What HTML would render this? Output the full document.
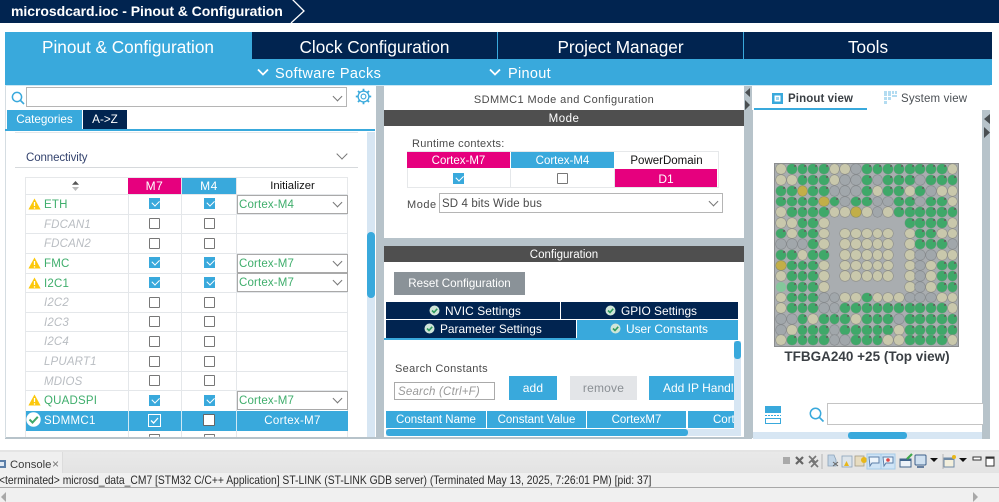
<!DOCTYPE html>
<html><head><meta charset="utf-8"><style>
html,body{margin:0;padding:0}
body{width:999px;height:502px;overflow:hidden;background:#fff;position:relative;font-family:"Liberation Sans",sans-serif;filter:blur(.3px)}
div,span,svg{position:absolute;white-space:nowrap;box-sizing:border-box}
.c{text-align:center}
.w{color:#fff}
.dk{background:#012450}.bl{background:#39a9dc}.pk{background:#e6007e}
.tab{top:32px;height:27px;line-height:30px;font-size:17.2px;text-align:center;color:#fff}
.ln{background:#e4e7ea;height:1px}
.lb{left:44px;font-size:11.5px;height:20px;line-height:20px;margin-top:1px;color:#b9bdc2;font-style:italic;letter-spacing:.15px}
.gn{font-style:normal;color:#3fae6c;letter-spacing:.2px}
.cb{width:11px;height:11px;border:1.5px solid #777;background:#fff;border-radius:1px}
.ck{width:11px;height:11px;background:#39a9dc}
.ck:after{content:"";position:absolute;left:2.5px;top:1.5px;width:6px;height:3.5px;border-left:1.5px solid #fff;border-bottom:1.5px solid #fff;transform:rotate(-45deg)}
.dd{left:237px;width:111px;height:19px;border:1px solid #a9a9a9;background:#fff;color:#3fae6c;font-size:11.5px;line-height:18px;padding-left:1px;letter-spacing:.15px}
.ch{width:7px;height:7px;border-right:1px solid #777;border-bottom:1px solid #777;transform:rotate(45deg)}
.tb{color:#fff;font-size:12px;text-align:center;height:18px;line-height:18px}
.bga{left:774px;top:163px;width:185px;height:184px;background:#a9adb0;border:1px solid #8b8d8f;display:grid;grid-template-columns:repeat(17,10.73px);grid-auto-rows:10.7px;padding:0 0 0 .65px}
.bga i{display:block;width:9.8px;height:9.8px;border-radius:50%;margin:.45px;position:relative}
.g{background:#3fa869;box-shadow:0 0 0 .4px #7f9a88}
.g:after{content:"";position:absolute;right:1px;top:1px;width:2px;height:2px;background:#5d6d60}
.e{background:#c9c8ac;box-shadow:0 0 0 .6px #8e8f88}
.s{background:#a1a7ab;box-shadow:0 0 0 .6px #85898c}
.y{background:#c2ae48;box-shadow:0 0 0 .6px #8e8f60}
.l{background:#84c79b}
.n{background:transparent}
.warn{left:28px;width:13px;height:12px}
</style></head><body>

<!-- title bar -->
<div class="dk" style="left:0;top:0;width:999px;height:23px"></div>
<div class="w" style="left:11px;top:2px;font-size:14px;font-weight:bold;line-height:18px;letter-spacing:-.05px">microsdcard.ioc - Pinout &amp; Configuration</div>
<svg style="left:288px;top:0" width="20" height="23"><path d="M4 -1 L16 11 L3 23" fill="none" stroke="#fff" stroke-width="1.3"/></svg>

<!-- tabs -->
<div class="bl" style="left:5px;top:32px;width:987px;height:53px"></div>
<div class="tab" style="left:5px;width:246px">Pinout &amp; Configuration</div>
<div class="tab dk" style="left:252px;width:245px">Clock Configuration</div>
<div class="tab dk" style="left:498px;width:245px">Project Manager</div>
<div class="tab dk" style="left:744px;width:248px">Tools</div>
<svg style="left:257px;top:68px" width="12" height="9"><path d="M1 1.5L6 6.5L11 1.5" fill="none" stroke="#fff" stroke-width="1.8"/></svg>
<div class="w" style="left:275px;top:65px;font-size:14.5px;line-height:18px;letter-spacing:.4px">Software Packs</div>
<svg style="left:489px;top:68px" width="12" height="9"><path d="M1 1.5L6 6.5L11 1.5" fill="none" stroke="#fff" stroke-width="1.8"/></svg>
<div class="w" style="left:508px;top:65px;font-size:14.5px;line-height:18px;letter-spacing:.3px">Pinout</div>

<!-- backgrounds -->
<div style="left:5px;top:85px;width:985px;height:1px;background:#cbe7f4"></div>
<div style="left:376px;top:86px;width:8px;height:353px;background:#b7c3ca"></div>
<div style="left:744px;top:86px;width:8px;height:353px;background:#b7c3ca"></div>
<div style="left:982px;top:110px;width:8px;height:329px;background:#b7c3ca"></div>
<div style="left:384px;top:238px;width:360px;height:8px;background:#b7c3ca"></div>
<div style="left:5px;top:437px;width:371px;height:2px;background:#b7c3ca"></div>
<div style="left:384px;top:437px;width:360px;height:2px;background:#b7c3ca"></div>
<div style="left:5px;top:86px;width:1px;height:352px;background:#d5dde2"></div>
<div style="left:752px;top:110px;width:1px;height:328px;background:#b7c3ca"></div>
<svg style="left:745px;top:88px" width="6" height="24"><path d="M5 0V9L0 4.5Z M0 12V22L5 17Z" fill="#4a4f52"/></svg>
<svg style="left:984px;top:114px" width="7" height="26"><path d="M6 0V10L0 5Z M0 13V24L6 18.5Z" fill="#4a4f52"/></svg>

<!-- left panel top -->
<svg style="left:11px;top:91px" width="15" height="15"><circle cx="6" cy="6" r="4.6" fill="none" stroke="#39a9dc" stroke-width="1.5"/><path d="M9.5 9.5L13 13" stroke="#39a9dc" stroke-width="1.6"/></svg>
<div style="left:26px;top:87px;width:321px;height:20px;border:1px solid #b5b5b5;background:#fff"></div>
<div class="ch" style="left:334px;top:93px"></div>
<svg style="left:355px;top:88px" width="17" height="17" viewBox="0 0 17 17"><circle cx="8.5" cy="8.5" r="5.4" fill="none" stroke="#39a9dc" stroke-width="1.3"/><circle cx="8.5" cy="8.5" r="2.4" fill="none" stroke="#39a9dc" stroke-width="1.1"/><path d="M8.5 0.8V3M8.5 14V16.2M0.8 8.5H3M14 8.5H16.2M3 3L4.6 4.6M12.4 12.4L14 14M14 3L12.4 4.6M4.6 12.4L3 14" stroke="#39a9dc" stroke-width="1.8"/></svg>
<div class="bl tb" style="left:7px;top:110px;width:75px;height:19px;line-height:19px;font-size:11.7px">Categories</div>
<div class="dk tb" style="left:83px;top:110px;width:44px;height:19px;line-height:19px;font-size:11.7px">A-&gt;Z</div>
<div class="bl" style="left:5px;top:129px;width:370px;height:2px"></div>
<div style="left:367px;top:132px;width:8px;height:305px;background:#d7e6f3"></div>
<div class="bl" style="left:367px;top:232px;width:8px;height:66px;border-radius:4px"></div>
<div class="ln" style="left:15px;top:132px;width:343px"></div>
<div style="left:26px;top:151px;font-size:11.5px;line-height:15px;color:#34436e;letter-spacing:-.1px">Connectivity</div>
<div class="ch" style="left:338px;top:150px;width:8px;height:8px"></div>
<div class="ln" style="left:15px;top:167px;width:343px;background:#d6d9dc"></div>

<!-- table -->
<div style="left:25px;top:177px;width:323px;height:260px;border:1px solid #e6e8ea;border-bottom:0"></div>
<div class="ln" style="left:128px;top:177px;width:1px;height:260px"></div>
<div class="ln" style="left:181px;top:177px;width:1px;height:260px"></div>
<div class="ln" style="left:236px;top:177px;width:1px;height:260px"></div>
<div class="ln" style="left:25px;top:194px;width:323px"></div>
<div class="ln" style="left:25px;top:214px;width:323px"></div>
<div class="ln" style="left:25px;top:233px;width:323px"></div>
<div class="ln" style="left:25px;top:253px;width:323px"></div>
<div class="ln" style="left:25px;top:273px;width:323px"></div>
<div class="ln" style="left:25px;top:292px;width:323px"></div>
<div class="ln" style="left:25px;top:312px;width:323px"></div>
<div class="ln" style="left:25px;top:331px;width:323px"></div>
<div class="ln" style="left:25px;top:351px;width:323px"></div>
<div class="ln" style="left:25px;top:371px;width:323px"></div>
<div class="ln" style="left:25px;top:390px;width:323px"></div>
<svg style="left:71px;top:181px" width="9" height="11"><path d="M4.5 0L8 3.8H1Z" fill="#555"/><path d="M4.5 10L8 6H1Z" fill="#bbb"/></svg>
<div class="pk tb" style="left:128px;top:178px;width:53px;height:16px;line-height:17px;font-size:12px;letter-spacing:.6px">M7</div>
<div class="bl tb" style="left:182px;top:178px;width:54px;height:16px;line-height:17px;font-size:12px;letter-spacing:.6px">M4</div>
<div class="tb" style="left:237px;top:178px;width:111px;height:16px;line-height:17px;color:#111;font-size:11.3px">Initializer</div>

<svg class="warn" style="top:198px" viewBox="0 0 13 12"><path d="M6.5 0.5L12.6 11.5H0.4Z" fill="#fcc80b"/><path d="M6.5 4V8M6.5 9.2V10.6" stroke="#fff" stroke-width="1.3"/></svg>
<svg class="warn" style="top:257px" viewBox="0 0 13 12"><path d="M6.5 0.5L12.6 11.5H0.4Z" fill="#fcc80b"/><path d="M6.5 4V8M6.5 9.2V10.6" stroke="#fff" stroke-width="1.3"/></svg>
<svg class="warn" style="top:277px" viewBox="0 0 13 12"><path d="M6.5 0.5L12.6 11.5H0.4Z" fill="#fcc80b"/><path d="M6.5 4V8M6.5 9.2V10.6" stroke="#fff" stroke-width="1.3"/></svg>
<svg class="warn" style="top:394px" viewBox="0 0 13 12"><path d="M6.5 0.5L12.6 11.5H0.4Z" fill="#fcc80b"/><path d="M6.5 4V8M6.5 9.2V10.6" stroke="#fff" stroke-width="1.3"/></svg>

<div class="lb gn" style="top:194px">ETH</div>
<div class="lb" style="top:214px">FDCAN1</div>
<div class="lb" style="top:233px">FDCAN2</div>
<div class="lb gn" style="top:253px">FMC</div>
<div class="lb gn" style="top:273px">I2C1</div>
<div class="lb" style="top:292px">I2C2</div>
<div class="lb" style="top:312px">I2C3</div>
<div class="lb" style="top:331px">I2C4</div>
<div class="lb" style="top:351px">LPUART1</div>
<div class="lb" style="top:371px">MDIOS</div>
<div class="lb gn" style="top:390px">QUADSPI</div>

<div class="ck" style="left:149px;top:198px"></div><div class="ck" style="left:204px;top:198px"></div>
<div class="cb" style="left:149px;top:218px"></div><div class="cb" style="left:204px;top:218px"></div>
<div class="cb" style="left:149px;top:238px"></div><div class="cb" style="left:204px;top:238px"></div>
<div class="ck" style="left:149px;top:257px"></div><div class="ck" style="left:204px;top:257px"></div>
<div class="ck" style="left:149px;top:277px"></div><div class="ck" style="left:204px;top:277px"></div>
<div class="cb" style="left:149px;top:297px"></div><div class="cb" style="left:204px;top:297px"></div>
<div class="cb" style="left:149px;top:316px"></div><div class="cb" style="left:204px;top:316px"></div>
<div class="cb" style="left:149px;top:336px"></div><div class="cb" style="left:204px;top:336px"></div>
<div class="cb" style="left:149px;top:356px"></div><div class="cb" style="left:204px;top:356px"></div>
<div class="cb" style="left:149px;top:375px"></div><div class="cb" style="left:204px;top:375px"></div>
<div class="ck" style="left:149px;top:395px"></div><div class="ck" style="left:204px;top:395px"></div>
<div class="cb" style="left:149px;top:434px;height:3px;border-bottom:0"></div><div class="cb" style="left:204px;top:434px;height:3px;border-bottom:0"></div>

<div class="dd" style="top:195px">Cortex-M4<div class="ch" style="left:96px;top:3px"></div></div>
<div class="dd" style="top:254px">Cortex-M7<div class="ch" style="left:96px;top:3px"></div></div>
<div class="dd" style="top:273px">Cortex-M7<div class="ch" style="left:96px;top:3px"></div></div>
<div class="dd" style="top:391px">Cortex-M7<div class="ch" style="left:96px;top:3px"></div></div>

<!-- selected row -->
<div class="bl" style="left:26px;top:411px;width:322px;height:20px"></div>
<div style="left:128px;top:411px;width:1px;height:20px;background:#cfe9f5"></div>
<div style="left:181px;top:411px;width:1px;height:20px;background:#cfe9f5"></div>
<div style="left:236px;top:411px;width:1px;height:20px;background:#cfe9f5"></div>
<svg style="left:26px;top:412px" width="15" height="15"><circle cx="7.5" cy="7.5" r="7.2" fill="#fff"/><path d="M3.5 7.5L6.5 10.5L11.8 4.8" fill="none" stroke="#3fa869" stroke-width="2"/></svg>
<div class="w" style="left:44px;top:411px;font-size:11.5px;line-height:21px;letter-spacing:.3px">SDMMC1</div>
<div style="left:148px;top:414px;width:13px;height:13px;border:1px solid #fff"></div>
<svg style="left:150px;top:416px" width="9" height="9"><path d="M1 4.5L3.6 7L8 2" fill="none" stroke="#fff" stroke-width="1.3"/></svg>
<div class="cb" style="left:203px;top:414px;width:12px;height:12px;border-color:#666"></div>
<div class="w c" style="left:237px;top:411px;width:111px;font-size:11.5px;line-height:21px;letter-spacing:.3px">Cortex-M7</div>

<!-- middle: mode -->
<div class="c" style="left:384px;top:92px;width:360px;font-size:11px;line-height:16px;color:#4a4a4a;letter-spacing:.42px">SDMMC1 Mode and Configuration</div>
<div class="w c" style="left:384px;top:110px;width:360px;height:16px;background:#4f4f4f;font-size:11.5px;line-height:18px;letter-spacing:.5px">Mode</div>
<div style="left:412px;top:137px;font-size:11px;line-height:15px;color:#4a4a4a;letter-spacing:.27px">Runtime contexts:</div>
<div style="left:407px;top:151px;width:312px;height:37px;border:1px solid #e6e8ea"></div>
<div class="pk tb" style="left:407px;top:152px;width:103px;height:16px;line-height:18px;font-size:11.5px">Cortex-M7</div>
<div class="bl tb" style="left:511px;top:152px;width:103px;height:16px;line-height:18px;font-size:11.5px">Cortex-M4</div>
<div class="tb" style="left:615px;top:152px;width:103px;height:16px;line-height:18px;color:#111;font-size:11.5px">PowerDomain</div>
<div class="ln" style="left:510px;top:169px;width:1px;height:18px"></div>
<div class="ln" style="left:614px;top:169px;width:1px;height:18px"></div>
<div class="ck" style="left:453px;top:173px"></div>
<div class="cb" style="left:557px;top:173px"></div>
<div class="pk tb" style="left:615px;top:169px;width:102px;height:18px;line-height:20px">D1</div>
<div style="left:407px;top:198px;font-size:11px;line-height:14px;color:#4a4a4a;letter-spacing:.55px">Mode</div>
<div style="left:439px;top:193px;width:284px;height:20px;border:1px solid #b5b5b5;color:#4a4a4a;font-size:11.5px;line-height:20px;padding-left:2px;letter-spacing:.12px">SD 4 bits Wide bus<div class="ch" style="left:270px;top:4px"></div></div>

<!-- config -->
<div class="w c" style="left:384px;top:246px;width:360px;height:16px;background:#4f4f4f;font-size:11.5px;line-height:18px">Configuration</div>
<div class="w c" style="left:394px;top:272px;width:131px;height:23px;background:#8a9298;font-size:11.6px;line-height:24px">Reset Configuration</div>
<div class="dk" style="left:386px;top:302px;width:174px;height:17px"></div>
<div class="dk" style="left:561px;top:302px;width:177px;height:17px"></div>
<div class="dk" style="left:386px;top:320px;width:190px;height:18px"></div>
<div class="bl" style="left:577px;top:320px;width:161px;height:18px"></div>
<div class="bl" style="left:384px;top:338px;width:354px;height:2px"></div>

<svg style="left:429px;top:305px" width="11" height="11"><circle cx="5.5" cy="5.5" r="5" fill="#cfe5d8"/><path d="M3 5.5L5 7.5L8.2 3.8" fill="none" stroke="#2f9c5e" stroke-width="1.6"/></svg>
<div class="w" style="left:445px;top:302px;font-size:11.9px;line-height:18px;letter-spacing:.1px">NVIC Settings</div>
<svg style="left:605px;top:305px" width="11" height="11"><circle cx="5.5" cy="5.5" r="5" fill="#cfe5d8"/><path d="M3 5.5L5 7.5L8.2 3.8" fill="none" stroke="#2f9c5e" stroke-width="1.6"/></svg>
<div class="w" style="left:621px;top:302px;font-size:11.9px;line-height:18px">GPIO Settings</div>
<svg style="left:424px;top:323px" width="11" height="11"><circle cx="5.5" cy="5.5" r="5" fill="#cfe5d8"/><path d="M3 5.5L5 7.5L8.2 3.8" fill="none" stroke="#2f9c5e" stroke-width="1.6"/></svg>
<div class="w" style="left:440px;top:320px;font-size:11.9px;line-height:18px">Parameter Settings</div>
<svg style="left:610px;top:323px" width="11" height="11"><circle cx="5.5" cy="5.5" r="5" fill="#cfe5d8"/><path d="M3 5.5L5 7.5L8.2 3.8" fill="none" stroke="#2f9c5e" stroke-width="1.6"/></svg>
<div class="w" style="left:626px;top:320px;font-size:11.9px;line-height:18px">User Constants</div>

<div style="left:734px;top:341px;width:7px;height:95px;background:#d7e6f3"></div>
<div class="bl" style="left:734px;top:341px;width:7px;height:18px;border-radius:3px"></div>
<div style="left:395px;top:362px;font-size:11px;line-height:14px;color:#4a4a4a;letter-spacing:.35px">Search Constants</div>
<div style="left:394px;top:382px;width:101px;height:18px;border:1px solid #aaa;color:#999;font-size:11.5px;line-height:18px;padding-left:3px;font-style:italic;letter-spacing:.2px">Search (Ctrl+F)</div>
<div class="bl tb" style="left:509px;top:376px;width:48px;height:24px;line-height:24px;letter-spacing:.2px">add</div>
<div class="tb" style="left:570px;top:376px;width:67px;height:24px;line-height:24px;background:#e3e5e8;color:#8a8f94;letter-spacing:.2px">remove</div>
<div style="left:649px;top:376px;width:85px;height:24px;overflow:hidden" class="bl"><div class="w" style="left:14px;top:0;font-size:12px;line-height:24px">Add IP Handle</div></div>
<div class="bl tb" style="left:386px;top:411px;width:100px;height:17px;line-height:19px;font-size:11.5px">Constant Name</div>
<div class="bl tb" style="left:487px;top:411px;width:99px;height:17px;line-height:19px;font-size:11.5px">Constant Value</div>
<div class="bl tb" style="left:587px;top:411px;width:99px;height:17px;line-height:19px;font-size:11.5px">CortexM7</div>
<div class="bl" style="left:688px;top:411px;width:46px;height:17px;overflow:hidden"><div class="w" style="left:25px;top:0;font-size:11.5px;line-height:19px">CortexM4</div></div>
<div style="left:386px;top:429px;width:348px;height:7px;background:#d7e6f3"></div>
<div class="bl" style="left:386px;top:429px;width:302px;height:7px;border-radius:3px"></div>

<!-- right panel -->
<svg style="left:771px;top:92px" width="13" height="13"><rect x="1" y="1" width="11" height="11" fill="#39a9dc"/><rect x="3.5" y="3.5" width="6" height="6" fill="#fff"/><rect x="5" y="5" width="3" height="3" fill="#9dd4ee"/></svg>
<div style="left:788px;top:92px;font-size:11.5px;font-weight:bold;line-height:15px;color:#3a3f44;letter-spacing:.1px">Pinout view</div>
<div class="bl" style="left:754px;top:108px;width:113px;height:2px"></div>
<svg style="left:884px;top:91px" width="13" height="14"><path d="M0 0h3v5H0zM4 0h3v5H4zM8 0h2v3H8zM11 0h2v3h-2zM0 6h3v3H0zM4 6h3v3H4zM8 4h5v2H8zM0 10h3v3H0z" fill="#b3dcf1"/></svg>
<div style="left:901px;top:92px;font-size:11.5px;line-height:15px;color:#4a4f54;letter-spacing:.15px">System view</div>

<div class="bga">
<i class="e"></i><i class="g"></i><i class="g"></i><i class="g"></i><i class="g"></i><i class="e"></i><i class="e"></i><i class="s"></i><i class="g"></i><i class="g"></i><i class="g"></i><i class="g"></i><i class="g"></i><i class="g"></i><i class="g"></i><i class="g"></i><i class="e"></i>
<i class="e"></i><i class="e"></i><i class="g"></i><i class="g"></i><i class="g"></i><i class="e"></i><i class="s"></i><i class="s"></i><i class="g"></i><i class="s"></i><i class="g"></i><i class="g"></i><i class="g"></i><i class="s"></i><i class="g"></i><i class="g"></i><i class="g"></i>
<i class="g"></i><i class="g"></i><i class="y"></i><i class="g"></i><i class="g"></i><i class="s"></i><i class="s"></i><i class="s"></i><i class="g"></i><i class="e"></i><i class="g"></i><i class="g"></i><i class="e"></i><i class="g"></i><i class="s"></i><i class="e"></i><i class="e"></i>
<i class="g"></i><i class="g"></i><i class="g"></i><i class="g"></i><i class="y"></i><i class="g"></i><i class="s"></i><i class="g"></i><i class="g"></i><i class="s"></i><i class="s"></i><i class="g"></i><i class="g"></i><i class="s"></i><i class="g"></i><i class="g"></i><i class="e"></i>
<i class="e"></i><i class="g"></i><i class="g"></i><i class="g"></i><i class="g"></i><i class="e"></i><i class="e"></i><i class="y"></i><i class="e"></i><i class="s"></i><i class="e"></i><i class="g"></i><i class="g"></i><i class="g"></i><i class="g"></i><i class="g"></i><i class="g"></i>
<i class="e"></i><i class="e"></i><i class="g"></i><i class="g"></i><i class="e"></i><i class="n"></i><i class="n"></i><i class="n"></i><i class="n"></i><i class="n"></i><i class="n"></i><i class="n"></i><i class="g"></i><i class="g"></i><i class="g"></i><i class="g"></i><i class="e"></i>
<i class="g"></i><i class="e"></i><i class="g"></i><i class="g"></i><i class="e"></i><i class="n"></i><i class="e"></i><i class="e"></i><i class="e"></i><i class="e"></i><i class="e"></i><i class="n"></i><i class="e"></i><i class="g"></i><i class="g"></i><i class="e"></i><i class="e"></i>
<i class="s"></i><i class="s"></i><i class="s"></i><i class="g"></i><i class="e"></i><i class="n"></i><i class="e"></i><i class="e"></i><i class="e"></i><i class="e"></i><i class="e"></i><i class="n"></i><i class="e"></i><i class="g"></i><i class="g"></i><i class="g"></i><i class="s"></i>
<i class="g"></i><i class="g"></i><i class="e"></i><i class="g"></i><i class="g"></i><i class="n"></i><i class="e"></i><i class="e"></i><i class="e"></i><i class="e"></i><i class="e"></i><i class="n"></i><i class="e"></i><i class="s"></i><i class="s"></i><i class="e"></i><i class="e"></i>
<i class="y"></i><i class="g"></i><i class="g"></i><i class="g"></i><i class="e"></i><i class="n"></i><i class="e"></i><i class="e"></i><i class="e"></i><i class="e"></i><i class="e"></i><i class="n"></i><i class="e"></i><i class="s"></i><i class="e"></i><i class="g"></i><i class="g"></i>
<i class="e"></i><i class="g"></i><i class="g"></i><i class="g"></i><i class="e"></i><i class="n"></i><i class="e"></i><i class="e"></i><i class="e"></i><i class="e"></i><i class="e"></i><i class="n"></i><i class="e"></i><i class="s"></i><i class="e"></i><i class="g"></i><i class="g"></i>
<i class="l"></i><i class="g"></i><i class="g"></i><i class="g"></i><i class="e"></i><i class="n"></i><i class="n"></i><i class="n"></i><i class="n"></i><i class="n"></i><i class="n"></i><i class="n"></i><i class="e"></i><i class="s"></i><i class="e"></i><i class="g"></i><i class="g"></i>
<i class="e"></i><i class="g"></i><i class="g"></i><i class="g"></i><i class="s"></i><i class="s"></i><i class="e"></i><i class="e"></i><i class="g"></i><i class="e"></i><i class="e"></i><i class="e"></i><i class="s"></i><i class="s"></i><i class="s"></i><i class="e"></i><i class="e"></i>
<i class="e"></i><i class="g"></i><i class="g"></i><i class="g"></i><i class="s"></i><i class="s"></i><i class="g"></i><i class="g"></i><i class="g"></i><i class="g"></i><i class="g"></i><i class="g"></i><i class="g"></i><i class="g"></i><i class="g"></i><i class="g"></i><i class="e"></i>
<i class="s"></i><i class="s"></i><i class="g"></i><i class="e"></i><i class="g"></i><i class="g"></i><i class="g"></i><i class="e"></i><i class="g"></i><i class="g"></i><i class="g"></i><i class="s"></i><i class="g"></i><i class="g"></i><i class="g"></i><i class="g"></i><i class="g"></i>
<i class="s"></i><i class="e"></i><i class="g"></i><i class="g"></i><i class="g"></i><i class="s"></i><i class="g"></i><i class="g"></i><i class="g"></i><i class="g"></i><i class="g"></i><i class="e"></i><i class="g"></i><i class="g"></i><i class="g"></i><i class="g"></i><i class="g"></i>
<i class="e"></i><i class="g"></i><i class="g"></i><i class="g"></i><i class="g"></i><i class="s"></i><i class="s"></i><i class="g"></i><i class="g"></i><i class="g"></i><i class="e"></i><i class="e"></i><i class="g"></i><i class="g"></i><i class="g"></i><i class="g"></i><i class="e"></i>
</div>
<div class="c" style="left:752px;top:349px;width:230px;font-size:13.5px;font-weight:bold;line-height:16px;color:#3a3f44">TFBGA240 +25 (Top view)</div>

<svg style="left:765px;top:405px" width="17" height="20"><rect x="0" y="1" width="16" height="7" fill="#39a9dc"/><path d="M0 10.5H16" stroke="#39a9dc" stroke-dasharray="2 1"/><rect x="0.5" y="13.5" width="15" height="5" fill="none" stroke="#39a9dc"/></svg>
<svg style="left:809px;top:407px" width="16" height="16"><circle cx="6.5" cy="6.5" r="5.2" fill="none" stroke="#39a9dc" stroke-width="1.5"/><path d="M10.3 10.3L14.5 14.5" stroke="#39a9dc" stroke-width="1.7"/></svg>
<div style="left:827px;top:403px;width:156px;height:22px;border:1px solid #c4c4c4;border-right:0;background:#fff"></div>
<div style="left:753px;top:432px;width:229px;height:7px;background:#d7e6f3"></div>
<div class="bl" style="left:848px;top:432px;width:59px;height:7px;border-radius:3px"></div>

<!-- console -->
<div style="left:0;top:450px;width:999px;height:2px;background:#e4e4e4"></div>
<div style="left:0;top:452px;width:999px;height:21px;background:linear-gradient(#e9e9e9,#e3e3e3)"></div>
<div style="left:0;top:452px;width:63px;height:21px;background:#efefef;border-right:1px solid #dcdcdc"></div>
<svg style="left:0;top:459px" width="8" height="11"><rect x="-3" y="1" width="9" height="8" fill="#5b7ea8"/><rect x="-3" y="3" width="7" height="4" fill="#dfe8f2"/></svg>
<div style="left:10px;top:458px;font-size:11.3px;line-height:15px;color:#3c3c3c">Console</div>
<div style="left:52px;top:457px;font-size:12px;line-height:15px;color:#777">×</div>
<div style="left:0;top:473px;width:999px;height:14px;background:#f0f0f0"></div>
<div style="left:-1px;top:473px;font-size:11.8px;line-height:15px;color:#2b2b2b;transform:scaleX(.875);transform-origin:0 0">&lt;terminated&gt; microsd_data_CM7 [STM32 C/C++ Application] ST-LINK (ST-LINK GDB server) (Terminated May 13, 2025, 7:26:01 PM) [pid: 37]</div>
<div style="left:0;top:487px;width:999px;height:1px;background:#a8a8a8"></div>
<div style="left:0;top:488px;width:999px;height:14px;background:#f0f0f0"></div>
<svg style="left:1px;top:492px" width="6" height="10"><path d="M5 0V10L0 5Z" fill="#a8a8a8"/></svg>
<svg style="left:973px;top:492px" width="6" height="10"><path d="M0 0V10L5 5Z" fill="#a8a8a8"/></svg>

<!-- console toolbar -->
<svg style="left:780px;top:452px" width="219" height="20">
<rect x="3" y="5" width="7" height="7" fill="#a9a9a9"/>
<path d="M16 5L23 12M23 5L16 12" stroke="#666" stroke-width="2.2"/>
<path d="M29 4L36 11M36 4L29 11M31 8L38 15M38 8L31 15" stroke="#777" stroke-width="1.7"/>
<path d="M42 2V17M163 2V17" stroke="#b5b5b5"/>
<path d="M48 3H54L56 8V14H48Z" fill="#c3d5e6" stroke="#8ba3ba" stroke-width=".8"/><path d="M53 10L58 14M58 10L53 14" stroke="#666"/>
<rect x="62" y="4" width="10" height="11" fill="#dde4ea" stroke="#8ba3ba" stroke-width=".8"/><path d="M64 14L66.500 9L69 14Z" fill="#e8b71a"/>
<rect x="75" y="4" width="9" height="10" fill="#e7dcc0" stroke="#a39b85" stroke-width=".8"/><circle cx="84" cy="8" r="3" fill="#e8b71a"/>
<rect x="87" y="2" width="14" height="15" fill="#cfe4f6" stroke="#a6cbe8"/><rect x="101" y="2" width="14" height="15" fill="#cfe4f6" stroke="#a6cbe8"/>
<path d="M89 5H99V11H92L90 14Z" fill="#eef5fb" stroke="#5b7ea8"/><path d="M103 5H113V11H106L104 14Z" fill="#eef5fb" stroke="#5b7ea8"/><circle cx="108" cy="8" r="1.8" fill="#d44"/>
<rect x="120" y="7" width="11" height="8" fill="#eef3f8" stroke="#41648c"/><rect x="120" y="7" width="11" height="2" fill="#41648c"/><path d="M127 7L132 2" stroke="#3fa84c" stroke-width="2.2"/>
<rect x="135" y="3" width="11" height="10" rx="1" fill="#cfe0f0" stroke="#3d5f8a"/><path d="M137 15H144" stroke="#3d5f8a" stroke-width="1.500"/>
<path d="M150 6H158L154 10Z" fill="#111"/>
<rect x="164" y="6" width="10" height="9" fill="#f3efdc" stroke="#6f8aa6"/><rect x="164" y="6" width="10" height="2" fill="#6f8aa6"/><circle cx="174" cy="5" r="2" fill="#e8b71a"/>
<path d="M179 6H187L183 10Z" fill="#111"/>
<rect x="193" y="5" width="8" height="3" fill="#fff" stroke="#333"/>
<rect x="206" y="5" width="8" height="9" fill="#fff" stroke="#333"/><path d="M206 6H214" stroke="#333" stroke-width="1.500"/>
</svg>
</body></html>
